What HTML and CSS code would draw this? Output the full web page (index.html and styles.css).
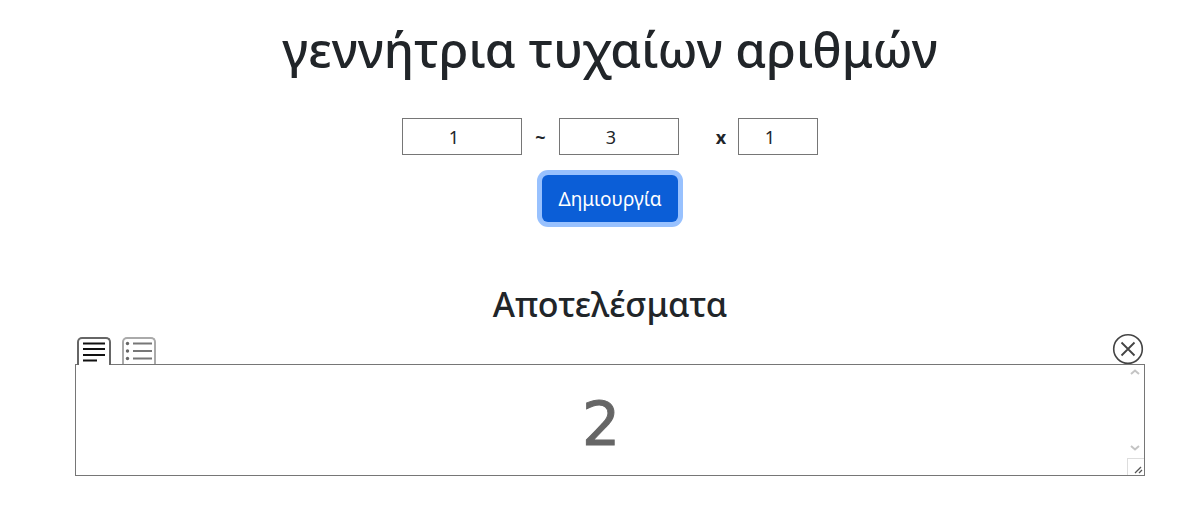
FILE: index.html
```html
<!DOCTYPE html>
<html lang="el">
<head>
    <meta charset="UTF-8">
    <meta name="viewport" content="width=device-width, initial-scale=1.0">
    <title>γεννήτρια τυχαίων αριθμών</title>
    <link rel="stylesheet" href="styles.css">
</head>
<body>
    <div class="container">
        <h1>γεννήτρια τυχαίων αριθμών</h1>

        <div class="range-row">
            <input class="num-input" type="text" value="1">
            <span class="sep">~</span>
            <input class="num-input" type="text" value="3">
            <span class="sep times">x</span>
            <input class="num-input small" type="text" value="1">
        </div>

        <button class="generate-btn">Δημιουργία</button>

        <h2>Αποτελέσματα</h2>

        <div class="tabs">
            <button class="tab active" aria-label="text">
                <svg width="34" height="28" viewBox="0 0 34 28">
                    <path d="M6 5.500H28M6 11H28M6 17H28M6 22.500H20" stroke="#111" stroke-width="2" fill="none"/>
                </svg>
            </button>
            <button class="tab" aria-label="list">
                <svg width="34" height="27" viewBox="0 0 34 27">
                    <circle cx="5.500" cy="5.500" r="1.700" fill="#666"/>
                    <circle cx="5.500" cy="13" r="1.700" fill="#666"/>
                    <circle cx="5.500" cy="20.500" r="1.700" fill="#666"/>
                    <path d="M11 5.500H30M11 13H30M11 20.500H30" stroke="#777" stroke-width="2" fill="none"/>
                </svg>
            </button>
            <button class="close-btn" aria-label="close">
                <svg width="32" height="32" viewBox="0 0 32 32">
                    <circle cx="16" cy="16" r="14.300" stroke="#444" stroke-width="1.600" fill="none"/>
                    <path d="M9.500 9.500L22.500 22.500M22.500 9.500L9.500 22.500" stroke="#444" stroke-width="1.800" fill="none"/>
                </svg>
            </button>
        </div>

        <div class="result-box">
            <div class="result-value">2</div>
            <!-- scrollbar arrows and resize grip -->
            <svg class="arrow arrow-up" width="10" height="6" viewBox="0 0 10 6">
                <path d="M1 5L5 1.500L9 5" stroke="#c4c4c4" stroke-width="2" fill="none"/>
            </svg>
            <svg class="arrow arrow-down" width="10" height="6" viewBox="0 0 10 6">
                <path d="M1 1L5 4.500L9 1" stroke="#c4c4c4" stroke-width="2" fill="none"/>
            </svg>
            <div class="grip">
                <svg width="17" height="17" viewBox="0 0 17 17">
                    <path d="M8 15L14 9M12 15L15 12" stroke="#555" stroke-width="1.300" fill="none"/>
                </svg>
            </div>
        </div>
    </div>
</body>
</html>
```

FILE: styles.css
```css
body {
    margin: 0;
    background: #fff;
    color: #212529;
    font-family: "Noto Sans", "Open Sans", sans-serif;
}

.container {
    padding: 0 41px 0 75px;
    text-align: center;
}

h1 {
    margin: 0;
    padding-top: 20px;
    font-size: 49px;
    font-weight: 500;
    line-height: 58px;
}

.range-row {
    display: flex;
    justify-content: center;
    align-items: center;
    margin-top: 40px;
    height: 37px;
    font-size: 18px;
}

.num-input {
    box-sizing: border-box;
    width: 120px;
    height: 37px;
    border: 1px solid #767676;
    padding: 0 16px 0 0;
    text-align: center;
    font-family: inherit;
    font-size: 18px;
    color: #212529;
}

.num-input.small {
    width: 80px;
}

.sep {
    width: 37px;
    font-weight: 700;
}

.sep.times {
    width: 59px;
    padding-left: 25px;
    box-sizing: border-box;
}

.generate-btn {
    display: block;
    box-sizing: border-box;
    width: 136px;
    height: 47px;
    margin: 20px auto 0;
    border: 0;
    border-radius: 6px;
    background: #0b5ed7;
    box-shadow: 0 0 0 5px #98c1fe;
    color: #fff;
    font-family: inherit;
    font-size: 19px;
}

h2 {
    margin: 0;
    padding-top: 63px;
    font-size: 34px;
    font-weight: 500;
    line-height: 38px;
}

.tabs {
    display: flex;
    align-items: flex-end;
    gap: 11px;
    height: 41px;
    padding-left: 2px;
}

.tab {
    box-sizing: border-box;
    width: 34px;
    height: 27px;
    padding: 0;
    background: #fff;
    border: 2px solid #aaa;
    border-bottom: 0;
    border-radius: 5px 5px 0 0;
    overflow: hidden;
}

.tab svg {
    display: block;
    margin: -2px;
}

.tab.active {
    border-color: #666;
    position: relative;
    z-index: 1;
    margin-bottom: -1px;
    height: 28px;
}

.close-btn {
    margin-left: auto;
    margin-right: 1px;
    margin-bottom: -1px;
    width: 32px;
    height: 32px;
    padding: 0;
    border: 0;
    background: none;
}

.close-btn svg {
    display: block;
}

.result-box {
    position: relative;
    box-sizing: border-box;
    height: 112px;
    border: 1px solid #767676;
}

.result-value {
    font-family: "DejaVu Sans", sans-serif;
    font-size: 60px;
    line-height: 118px;
    color: #666;
    padding-right: 18px;
    -webkit-text-stroke: 1px #666;
}

.arrow {
    position: absolute;
    right: 4px;
}

.arrow-up {
    top: 4px;
}

.arrow-down {
    bottom: 24px;
}

.grip {
    position: absolute;
    right: 0;
    bottom: 0;
    width: 17px;
    height: 17px;
    border-left: 1px solid #ddd;
    border-top: 1px solid #ddd;
    box-sizing: border-box;
}

.grip svg {
    display: block;
    margin: -1px;
}
```
